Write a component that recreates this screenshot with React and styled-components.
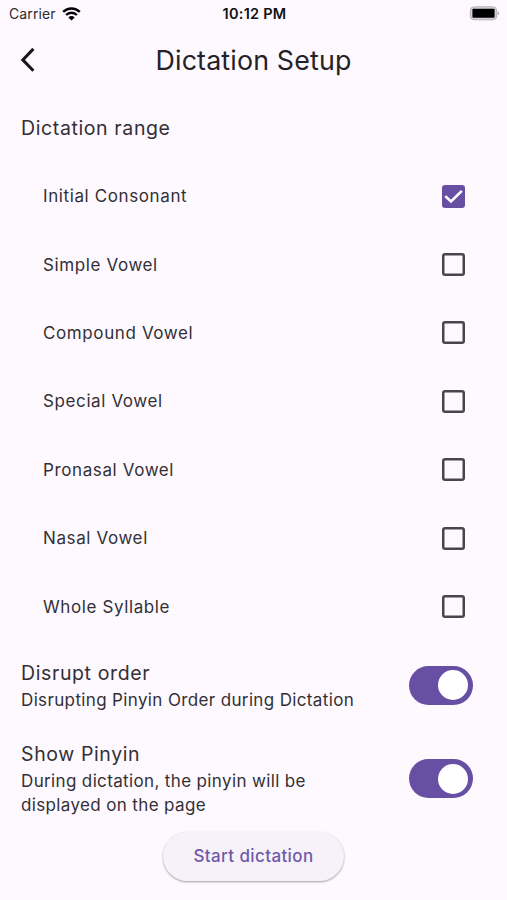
import React, { useState } from "react";
import styled, { createGlobalStyle } from "styled-components";

const GlobalStyle = createGlobalStyle`
  body {
    margin: 0;
    background: #fef9ff;
  }
  * {
    box-sizing: border-box;
  }
`;
const Screen = styled.div`
  width: 507px;
  height: 900px;
  overflow: hidden;
  display: flex;
  flex-direction: column;
  background: #fef9ff;
  color: #323036;
  font-family: Inter, "Liberation Sans", sans-serif;
`;
const StatusBar = styled.div`
  height: 25px;
  flex: none;
  display: grid;
  grid-template-columns: 1fr auto 1fr;
  align-items: center;
  padding: 3px 7px 0 9px;
  color: #111;
  font-size: 14px;
  line-height: 22px;
`;
const Carrier = styled.div`
  display: flex;
  align-items: center;
  gap: 6px;
  color: #2b2a2d;
  letter-spacing: 0.1px;
`;
const Clock = styled.div`
  font-size: 14.5px;
  font-weight: 600;
  letter-spacing: 0.25px;
`;
const BatteryIcon = styled.svg`
  justify-self: end;
  margin-top: -2px;
`;
const AppBar = styled.header`
  height: 68px;
  flex: none;
  display: grid;
  grid-template-columns: 56px 1fr 56px;
  align-items: center;
`;
const BackButton = styled.button`
  display: flex;
  padding: 2px 0 0 20px;
  border: 0;
  background: none;
`;
const Title = styled.h1`
  margin: 2px 0 0;
  text-align: center;
  font-size: 26.8px;
  font-weight: 400;
  line-height: 34px;
  letter-spacing: 0.16px;
  color: #242227;
`;
const Section = styled.section`
  height: 69px;
  flex: none;
  display: flex;
  align-items: center;
  padding: 2px 21px 0;
`;
const Label = styled.h2`
  margin: 0;
  font-size: 19.5px;
  font-weight: 400;
  line-height: 29px;
  letter-spacing: 0.62px;
`;
const RangeList = styled.div`
  flex: none;
  display: grid;
  grid-auto-rows: 68.4px;
`;
const RangeRow = styled.label`
  display: flex;
  align-items: center;
  justify-content: space-between;
  padding: 0 42px 0 43px;
  font-size: 17px;
  letter-spacing: 0.61px;
`;
const CheckBox = styled.button`
  width: 23px;
  height: 23px;
  display: flex;
  padding: 0;
  border: 0;
  border-radius: 3px;
  background: ${props => (props.$checked ? "#6750a4" : "transparent")};
  box-shadow: ${props => (props.$checked ? "none" : "inset 0 0 0 2.5px #48454e")};
`;
const SwitchRow = styled.div`
  height: ${props => props.$height}px;
  flex: none;
  display: flex;
  align-items: center;
  justify-content: space-between;
  padding: 0 34px 0 21px;
`;
const SwitchText = styled.div`
  width: 345px;
`;
const Hint = styled.p`
  margin: 0;
  font-size: 17px;
  line-height: 24.4px;
  letter-spacing: 0.36px;
`;
const Switch = styled.button`
  width: 64px;
  height: 39px;
  flex: none;
  display: flex;
  align-items: center;
  justify-content: ${props => (props.$on ? "flex-end" : "flex-start")};
  padding: 0 5px;
  border: 0;
  border-radius: 20px;
  background: ${props => (props.$on ? "#6750a4" : "#79747e")};
`;
const Thumb = styled.span`
  width: 30px;
  height: 30px;
  border-radius: 50%;
  background: #fff;
`;
const StartButton = styled.button`
  width: 181px;
  height: 49px;
  flex: none;
  align-self: center;
  margin-top: 4px;
  padding: 0;
  border: 0;
  border-radius: 25px;
  background: #f7f2fa;
  box-shadow: 0 1px 2px rgba(0, 0, 0, 0.28), 0 1px 3px rgba(0, 0, 0, 0.1);
  color: #6f5aa9;
  font-family: inherit;
  font-size: 17px;
  font-weight: 500;
  letter-spacing: 0.38px;
`;

const ranges = [
  "Initial Consonant",
  "Simple Vowel",
  "Compound Vowel",
  "Special Vowel",
  "Pronasal Vowel",
  "Nasal Vowel",
  "Whole Syllable"
];

const App = () => {
  const [selected, setSelected] = useState(["Initial Consonant"]);
  const [disrupt, setDisrupt] = useState(true);
  const [showPinyin, setShowPinyin] = useState(true);

  const toggle = name =>
    setSelected(
      selected.includes(name)
        ? selected.filter(item => item !== name)
        : [...selected, name]
    );

  return (
    <Screen>
      <GlobalStyle />
      <StatusBar>
        <Carrier>
          Carrier
          <svg width="19" height="14" viewBox="0 0 19 14" fill="none">
            <path d="M1.2 4.9a11.7 11.7 0 0 1 16.6 0" stroke="#000" strokeWidth="2.5" />
            <path d="M4.1 8a7.6 7.6 0 0 1 10.8 0" stroke="#000" strokeWidth="2.4" />
            <path d="M9.5 13.6 6.4 10.4a4.4 4.4 0 0 1 6.2 0Z" fill="#000" />
          </svg>
        </Carrier>
        <Clock>10:12 PM</Clock>
        <BatteryIcon width="31" height="15" viewBox="0 0 31 15">
          <rect x="1.3" y="0.8" width="26.4" height="13" rx="3.8" fill="#d5d2d6" stroke="#b5b2b6" />
          <rect x="3.4" y="2.8" width="22.2" height="9" rx="1" fill="#000" />
          <path d="M28.5 5.2c2.2.8 2.2 3.4 0 4.2Z" fill="#b5b2b6" />
        </BatteryIcon>
      </StatusBar>
      <AppBar>
        <BackButton aria-label="Back">
          <svg width="16" height="26" viewBox="0 0 16 26" fill="none">
            <path d="M13.4 1.9 2.8 12.9l10.6 10.9" stroke="#18171a" strokeWidth="3" />
          </svg>
        </BackButton>
        <Title>Dictation Setup</Title>
      </AppBar>
      <Section>
        <Label>Dictation range</Label>
      </Section>
      <RangeList>
        {ranges.map(name => (
          <RangeRow key={name}>
            {name}
            <CheckBox
              role="checkbox"
              aria-checked={selected.includes(name)}
              $checked={selected.includes(name)}
              onClick={() => toggle(name)}
            >
              {selected.includes(name) && (
                <svg width="23" height="23" viewBox="0 0 22 22" fill="none">
                  <path d="m3.1 10.6 5.5 5.2L19 5.6" stroke="#fff" strokeWidth="2.5" />
                </svg>
              )}
            </CheckBox>
          </RangeRow>
        ))}
      </RangeList>
      <SwitchRow $height={89}>
        <SwitchText>
          <Label>Disrupt order</Label>
          <Hint>Disrupting Pinyin Order during Dictation</Hint>
        </SwitchText>
        <Switch
          role="switch"
          aria-checked={disrupt}
          $on={disrupt}
          onClick={() => setDisrupt(!disrupt)}
        >
          <Thumb />
        </Switch>
      </SwitchRow>
      <SwitchRow $height={98}>
        <SwitchText>
          <Label>Show Pinyin</Label>
          <Hint>
            During dictation, the pinyin will be
            <br />
            displayed on the page
          </Hint>
        </SwitchText>
        <Switch
          role="switch"
          aria-checked={showPinyin}
          $on={showPinyin}
          onClick={() => setShowPinyin(!showPinyin)}
        >
          <Thumb />
        </Switch>
      </SwitchRow>
      <StartButton>Start dictation</StartButton>
    </Screen>
  );
};

export default App;
